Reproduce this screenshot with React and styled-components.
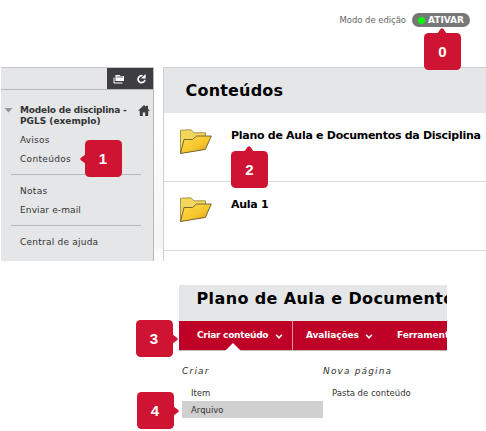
import React from 'react';
import styled, { createGlobalStyle } from 'styled-components';

const Global = createGlobalStyle`
  *, *::before, *::after { box-sizing: border-box; }
  body { margin: 0; background: #fff; overflow: hidden; font-family: "DejaVu Sans", Verdana, sans-serif; }
`;

const Page = styled.div`
  width: 486px;
  height: 431px;
  overflow: hidden;
  background: #fff;
`;

const Label = styled.span`
  display: block;
  white-space: nowrap;
  font-size: ${(p) => p.$size || 9}px;
  font-weight: ${(p) => (p.$bold ? 700 : 400)};
  font-style: ${(p) => (p.$italic ? 'italic' : 'normal')};
  letter-spacing: ${(p) => p.$spacing || 0}px;
  line-height: ${(p) => p.$line || 19}px;
  color: ${(p) => p.$color || '#333'};
`;

const ModeBar = styled.header`
  height: 67px;
  display: flex;
  justify-content: flex-end;
  align-items: flex-start;
  gap: 6px;
  padding: 13px 16px 0 0;
`;

const ModeToggle = styled.div`
  position: relative;
  display: flex;
  align-items: center;
  gap: 3px;
  width: 58px;
  height: 14px;
  padding-left: 6px;
  border-radius: 7px;
  background: #777;
`;

const StatusDot = styled.i`
  width: 7px;
  height: 7px;
  flex: none;
  border-radius: 50%;
  background: #0f0;
`;

const Marker = styled.div`
  position: absolute;
  z-index: 2;
  left: ${(p) => p.$x}px;
  top: ${(p) => p.$y}px;
  width: 37px;
  height: 37px;
  border-radius: 4.5px;
  background: #ce1432;
  color: #fff;
  font: 700 15px/37px "Liberation Sans", Arial, sans-serif;
  text-align: center;
`;

const Pointer = styled.svg`
  position: absolute;
  width: 10px;
  height: 6px;
  fill: #ce1432;
  ${(p) => p.$side === 'up' && 'top: -5px; left: 13px;'}
  ${(p) => p.$side === 'left' && 'top: 16px; left: -7px; transform: rotate(-90deg);'}
  ${(p) => p.$side === 'right' && 'top: 16px; right: -7px; transform: rotate(90deg);'}
`;

function Step({ n, x, y, side }) {
  return (
    <Marker $x={x} $y={y}>
      <Pointer $side={side} viewBox="0 0 10 6"><path d="M0 6 3.4 1.3Q5-.9 6.6 1.3L10 6Z" /></Pointer>
      {n}
    </Marker>
  );
}

const Course = styled.div`
  display: flex;
  height: 194px;
  padding-left: 1px;
`;

const Sidebar = styled.aside`
  position: relative;
  width: 153px;
  background: #e4e6e8;
  border-top: 1px solid #c3c5c8;
  border-right: 1px solid #b5b7ba;
`;

const Tools = styled.div`
  height: 22px;
  display: flex;
  justify-content: flex-end;
  border-bottom: 1px solid #b5b7ba;
`;

const ToolPair = styled.div`
  display: flex;
  width: 46px;
  align-items: center;
  justify-content: space-between;
  padding: 0 6px;
  background: #3e3e42;
`;

const CourseTitle = styled.div`
  display: grid;
  grid-template-columns: 16px 1fr 12px;
  height: 41px;
  padding: 15px 3px 0 3px;
  svg { display: block; }
`;

const TitleArrow = styled.svg`
  margin-top: 2px;
`;

const MenuGroup = styled.nav`
  margin: 0 12px 0 10px;
  padding: ${(p) => p.$top || 0}px 0 ${(p) => p.$bottom || 0}px 9px;
  border-bottom: ${(p) => (p.$last ? '0' : '1px solid #b5b7ba')};
`;

const Gutter = styled.div`
  width: 9px;
  background: linear-gradient(#fff 62px, #fafafa 110px, #f5f5f5 178px, #fdfdfd 188px);
`;

const Content = styled.main`
  width: 323px;
  border-left: 1px solid #ccced0;
  border-top: 1px solid #ccced0;
`;

const ContentHead = styled.div`
  height: 45px;
  padding: 11px 0 0 21.5px;
  background: #e4e6e8;
`;

const ContentRow = styled.div`
  position: relative;
  display: flex;
  align-items: flex-start;
  gap: 18px;
  height: 69px;
  padding: ${(p) => p.$top}px 0 0 15px;
  border-bottom: 1px solid #d8d9da;
`;

const FolderIcon = styled.svg`
  flex: none;
  margin-top: ${(p) => p.$drop}px;
`;

function Folder({ id, drop = 0 }) {
  return (
    <FolderIcon $drop={drop} width="34" height="26" viewBox="0 0 34 26">
      <defs>
        <linearGradient id={id} x1="0" y1="0" x2="1" y2="1">
          <stop stopColor="#ffdb4b" />
          <stop offset=".55" stopColor="#f6c72e" />
          <stop offset="1" stopColor="#d79a10" />
        </linearGradient>
      </defs>
      <path d="M1.5 1.2 12 .8 15 3.8H26.5V20L1.5 24Z" fill="#f3d75c" stroke="#9d8c43" strokeWidth=".9" />
      <path d="M1.5 24.5 5 10.5H13.5L17.5 7H32.3L26.4 20.4Z" fill={`url(#${id})`} stroke="#665b36" strokeWidth=".9" />
    </FolderIcon>
  );
}

const Detail = styled.section`
  position: relative;
  width: 268px;
  margin: 24px 0 0 179px;
`;

const DetailHead = styled.div`
  height: 36px;
  padding: 2px 0 0 17.5px;
  overflow: hidden;
  background: #e4e6e8;
`;

const ActionBar = styled.div`
  display: flex;
  height: 30px;
  overflow: hidden;
  background: #bf0027;
  border-bottom: 1px solid #c5b5b8;
`;

const Action = styled.div`
  display: flex;
  flex: none;
  align-items: center;
  gap: ${(p) => p.$gap || 5}px;
  width: ${(p) => p.$width}px;
  padding-left: ${(p) => p.$pad}px;
  border-right: ${(p) => (p.$divider ? '1px solid #de9aa8' : '0')};
`;

const Notch = styled.svg`
  position: absolute;
  left: 46px;
  top: 58px;
`;

const Submenu = styled.div`
  display: grid;
  grid-template-columns: 141px 1fr;
  padding: 11px 0 0 3px;
`;

const SubItem = styled.div`
  height: ${(p) => (p.$active ? 17 : 16)}px;
  padding-left: 9px;
  background: ${(p) => (p.$active ? '#d0d0d0' : 'transparent')};
`;

const SubHead = styled.div`
  height: 23px;
`;

function Chevron() {
  return (
    <svg width="8" height="6" viewBox="0 0 8 6" fill="none" stroke="#fff" strokeWidth="1.5">
      <path d="M1 1.7 4 4.8 7 1.7" />
    </svg>
  );
}

export default function App() {
  return (
    <Page>
      <Global />
      <ModeBar>
        <Label $size={8.5} $line={15} $spacing={-0.05} $color="#666">Modo de edição</Label>
        <ModeToggle>
          <StatusDot />
          <Label $size={9} $bold $line={14} $color="#fff">ATIVAR</Label>
          <Step n="0" x={12} y={20} side="up" />
        </ModeToggle>
      </ModeBar>

      <Course>
        <Sidebar>
          <Tools>
            <ToolPair>
              <svg width="12" height="12" viewBox="0 0 12 12">
                <path d="M2.5 2h4l1 1H11v5H2.5Z" fill="#fff" />
                <path d="M3.5 4H10" stroke="#3e3e42" strokeWidth=".8" />
                <path d="M1 4.5V10H9.5" fill="none" stroke="#fff" />
              </svg>
              <svg width="11" height="12" viewBox="0 0 11 12">
                <path d="M6.5 2.8A3.5 3.5 0 1 0 9 6.8" fill="none" stroke="#fff" strokeWidth="1.7" />
                <path d="M9.6 1V5.6H5Z" fill="#fff" />
              </svg>
            </ToolPair>
          </Tools>
          <CourseTitle>
            <TitleArrow width="9" height="6" viewBox="0 0 9 6"><path d="M.5 1H8.5L4.5 5.5Z" fill="#929496" /></TitleArrow>
            <div>
              <Label $bold $size={9} $line={10.5} $spacing={-0.2}>Modelo de disciplina -</Label>
              <Label $bold $size={9} $line={10.5}>PGLS (exemplo)</Label>
            </div>
            <svg width="12" height="11" viewBox="0 0 12 11">
              <path d="M6 0 8 1.8V.7h2v3l2 2H10.2V11H7.2V7.5H4.8V11H1.8V5.7H0Z" fill="#3e3e42" />
            </svg>
          </CourseTitle>
          <MenuGroup $bottom={5}>
            <Label $spacing={0.2}>Avisos</Label>
            <Label $spacing={0.32}>Conteúdos</Label>
          </MenuGroup>
          <MenuGroup $top={7} $bottom={5}>
            <Label $spacing={0.3}>Notas</Label>
            <Label $spacing={0.12}>Enviar e-mail</Label>
          </MenuGroup>
          <MenuGroup $top={7} $last>
            <Label $spacing={0.23}>Central de ajuda</Label>
          </MenuGroup>
          <Step n="1" x={83.5} y={71.5} side="left" />
        </Sidebar>
        <Gutter />
        <Content>
          <ContentHead>
            <Label $bold $size={16} $line={24} $spacing={0.2} $color="#000">Conteúdos</Label>
          </ContentHead>
          <ContentRow $top={14}>
            <Folder id="folder-plan" drop={2} />
            <Label $bold $size={11} $line={17} $spacing={-0.28} $color="#000">Plano de Aula e Documentos da Disciplina</Label>
            <Step n="2" x={67} y={38} side="up" />
          </ContentRow>
          <ContentRow $top={14}>
            <Folder id="folder-lesson" drop={1} />
            <Label $bold $size={11} $line={17} $spacing={-0.28} $color="#000">Aula 1</Label>
          </ContentRow>
        </Content>
      </Course>

      <Detail>
        <DetailHead>
          <Label $bold $size={16} $line={24} $spacing={0.38} $color="#000">Plano de Aula e Documento</Label>
        </DetailHead>
        <ActionBar>
          <Action $width={114} $pad={18} $gap={7} $divider>
            <Label $bold $size={9} $spacing={-0.28} $color="#fff">Criar conteúdo</Label>
            <Chevron />
          </Action>
          <Action $width={91} $pad={13} $gap={6}>
            <Label $bold $size={9} $spacing={-0.1} $color="#fff">Avaliações</Label>
            <Chevron />
          </Action>
          <Action $width={63} $pad={13}>
            <Label $bold $size={9} $spacing={-0.1} $color="#fff">Ferrament</Label>
          </Action>
        </ActionBar>
        <Notch width="16" height="8" viewBox="0 0 16 8"><path d="M0 8 8 0 16 8Z" fill="#fff" /></Notch>
        <Submenu>
          <div>
            <SubHead><Label $italic $spacing={1.2}>Criar</Label></SubHead>
            <SubItem><Label $size={8.5} $line={16}>Item</Label></SubItem>
            <SubItem $active><Label $size={8.5} $line={18}>Arquivo</Label></SubItem>
          </div>
          <div>
            <SubHead><Label $italic $spacing={1.15}>Nova página</Label></SubHead>
            <SubItem><Label $size={8.5} $line={16}>Pasta de conteúdo</Label></SubItem>
          </div>
        </Submenu>
        <Step n="3" x={-43.5} y={34.5} side="right" />
        <Step n="4" x={-42.5} y={107} side="right" />
      </Detail>
    </Page>
  );
}
